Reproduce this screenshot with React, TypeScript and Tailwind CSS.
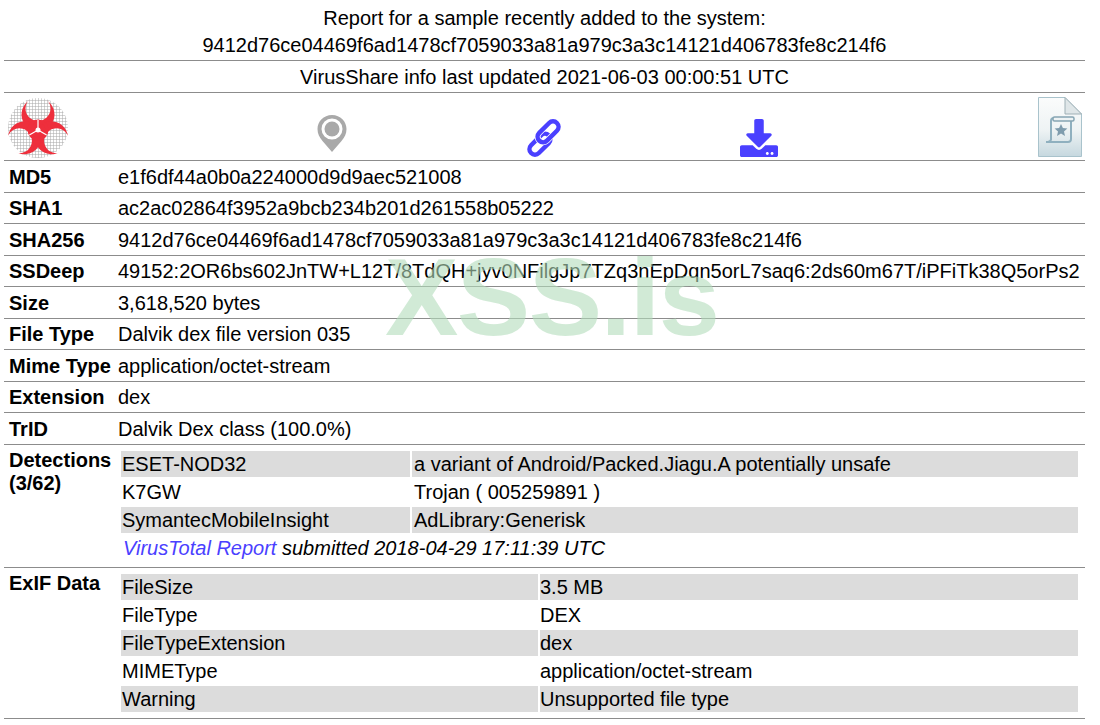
import { FaDownload } from 'react-icons/fa';

const fields = [
  ['MD5', 'e1f6df44a0b0a224000d9d9aec521008'],
  ['SHA1', 'ac2ac02864f3952a9bcb234b201d261558b05222'],
  ['SHA256', '9412d76ce04469f6ad1478cf7059033a81a979c3a3c14121d406783fe8c214f6'],
  ['SSDeep', '49152:2OR6bs602JnTW+L12T/8TdQH+jyv0NFilgJp7TZq3nEpDqn5orL7saq6:2ds60m67T/iPFiTk38Q5orPs2'],
  ['Size', '3,618,520 bytes'],
  ['File Type', 'Dalvik dex file version 035'],
  ['Mime Type', 'application/octet-stream'],
  ['Extension', 'dex'],
  ['TrID', 'Dalvik Dex class (100.0%)'],
];

const detections = [
  ['ESET-NOD32', 'a variant of Android/Packed.Jiagu.A potentially unsafe'],
  ['K7GW', 'Trojan ( 005259891 )'],
  ['SymantecMobileInsight', 'AdLibrary:Generisk'],
];

const exif = [
  ['FileSize', '3.5 MB'],
  ['FileType', 'DEX'],
  ['FileTypeExtension', 'dex'],
  ['MIMEType', 'application/octet-stream'],
  ['Warning', 'Unsupported file type'],
];

function Hazard() {
  const red = '#ee2f3c';
  return (
    <svg viewBox="0 0 60 62" className="w-[60px] h-[62px]">
      <defs>
        <pattern id="mesh" width="3" height="3" patternUnits="userSpaceOnUse">
          <rect width="3" height="3" fill="#fff" />
          <path d="M0 0H3M0 0V3" stroke="#a8a8a8" strokeWidth="1" />
        </pattern>
        <mask id="lobe" maskUnits="userSpaceOnUse" x="-20" y="-20" width="100" height="100">
          <rect x="-20" y="-20" width="100" height="100" fill="#fff" />
          <circle cx="30" cy="11.500" r="12.500" fill="#000" />
        </mask>
      </defs>
      <circle cx="30" cy="31" r="30" fill="url(#mesh)" />
      {[0, 120, 240].map((deg) => (
        <g key={deg} transform={`rotate(${deg} 30 33)`}>
          <circle cx="30" cy="17.500" r="16.500" fill={red} mask="url(#lobe)" />
        </g>
      ))}
      <circle cx="30" cy="33" r="9" fill="none" stroke={red} strokeWidth="3" />
      {[60, 180, 300].map((deg) => (
        <path key={deg} d="M30 33V43" stroke="#fff" strokeWidth="1.200" transform={`rotate(${deg} 30 33)`} />
      ))}
      <circle cx="30" cy="33" r="2.500" fill="#fff" />
    </svg>
  );
}

function Pin() {
  return (
    <svg viewBox="0 0 30 38" className="w-[30px] h-[38px]">
      <path fillRule="evenodd" fill="#a9a9a9" d="M15 0C6.5 0 .5 6.5.5 14c0 5 2 8 5 12l9.500 11 9.500-11c3-4 5-7 5-12C29.500 6.500 23.500 0 15 0zm0 3.500a10.500 10.500 0 1 1 0 21 10.500 10.500 0 0 1 0-21z" />
      <circle cx="15" cy="14" r="7.500" fill="#a9a9a9" />
    </svg>
  );
}

function ChainLink() {
  return (
    <svg viewBox="0 0 36 36" className="w-[36px] h-[36px] overflow-visible" fill="none" strokeWidth="4.500">
      <g transform="translate(18 18) rotate(-45)">
        <rect x="-19.750" y="-4" width="25" height="11" rx="5.500" stroke="#4a40ff" />
        <rect x="-5.250" y="-7" width="25" height="11" rx="5.500" stroke="#fff" strokeWidth="6" />
        <rect x="-5.250" y="-7" width="25" height="11" rx="5.500" stroke="#4a40ff" />
      </g>
    </svg>
  );
}

function FileIcon() {
  return (
    <svg viewBox="0 0 44 60" className="w-[44px] h-[60px]">
      <defs>
        <linearGradient id="paper" x1="0" y1="0" x2="0" y2="1">
          <stop offset="0" stopColor="#fbfcfc" />
          <stop offset="0.55" stopColor="#eef3f4" />
          <stop offset="1" stopColor="#c6d8df" />
        </linearGradient>
      </defs>
      <path d="M.5.500H27L43.500 17V59.500H.5z" fill="url(#paper)" stroke="#a9c3cc" />
      <path d="M27 .5V17H43.500z" fill="#dfe6e8" stroke="#9fb0b6" />
      <path d="M13 43V24c0-2 1-3 3-3h20M33 24v18c0 2-1 3-3 3H8c3 0 5-1 5-3" fill="none" stroke="#8fb0bf" strokeWidth="2" />
      <rect x="15" y="20" width="21" height="4" rx="1.500" fill="#eef3f4" stroke="#86a5b3" strokeWidth="1.500" />
      <path d="M23 27l1.900 4.100 4.500.4-3.400 3 1 4.400-4-2.300-4 2.300 1-4.400-3.400-3 4.500-.4z" fill="#7f9cad" />
    </svg>
  );
}

function Row({ label, children, className }: { label: React.ReactNode; children: React.ReactNode; className: string }) {
  return (
    <div className={`flex border-b border-[#8c8c8c] ${className}`}>
      <div className="w-[114px] pl-[5px] font-bold shrink-0">{label}</div>
      <div className="flex-1 min-w-0">{children}</div>
    </div>
  );
}

export default function App() {
  return (
    <div className="relative w-[1081px] ml-[4px] text-[20px] leading-[27px] text-black bg-white font-['Liberation_Sans',Arial,sans-serif]">
      <div className="pt-[5px] h-[61px] text-center border-b border-[#8c8c8c]">
        <div>Report for a sample recently added to the system:</div>
        <div>9412d76ce04469f6ad1478cf7059033a81a979c3a3c14121d406783fe8c214f6</div>
      </div>
      <div className="h-[32px] pt-[3px] text-center border-b border-[#8c8c8c]">
        VirusShare info last updated 2021-06-03 00:00:51 UTC
      </div>
      <div className="h-[68px] flex items-end border-b border-[#8c8c8c]">
        <div className="w-[114px] pb-[1px] pl-[4px]"><Hazard /></div>
        <div className="flex-1 flex items-end pb-[2px]">
          <div className="ml-[199px] mb-[5px]"><Pin /></div>
          <div className="ml-[179px] mb-[2px]"><ChainLink /></div>
          <div className="ml-[178px] mb-[1px]"><FaDownload className="w-[38px] h-[38px] text-[#4a40ff]" /></div>
          <div className="ml-auto mr-[3px] mb-[1px]"><FileIcon /></div>
        </div>
      </div>

      {fields.map(([label, value]) => (
        <Row key={label} label={label} className="h-[31.5px] pt-[2.7px]">
          <span className="whitespace-nowrap">{value}</span>
        </Row>
      ))}

      <Row label={<div className="pt-[4px] leading-[23px]">Detections<br />(3/62)</div>} className="h-[123.5px]">
        <div className="pt-[6px] pr-[7px] pl-[3px]">
          {detections.map(([name, result], i) => (
            <div key={name} className="grid grid-cols-[289px_1fr] gap-x-[2px] mb-[2px] h-[26px] leading-[26px]">
              <div className={`pl-[1px] ${i % 2 === 0 ? 'bg-[#dcdcdc]' : ''}`}>{name}</div>
              <div className={`pl-[2px] ${i % 2 === 0 ? 'bg-[#dcdcdc]' : ''}`}>{result}</div>
            </div>
          ))}
          <div className="pl-[2px] italic">
            <span className="text-[#4a40ff]">VirusTotal Report</span> submitted 2018-04-29 17:11:39 UTC
          </div>
        </div>
      </Row>

      <Row label={<div className="pt-[1.5px]">ExIF Data</div>} className="h-[151px]">
        <div className="pt-[6px] pr-[7px] pl-[3px]">
          {exif.map(([name, value], i) => (
            <div key={name} className="grid grid-cols-[417px_1fr] gap-x-[2px] h-[26px] mb-[2px] leading-[26px]">
              <div className={`pl-[1px] ${i % 2 === 0 ? 'bg-[#dcdcdc]' : ''}`}>{name}</div>
              <div className={i % 2 === 0 ? 'bg-[#dcdcdc]' : ''}>{value}</div>
            </div>
          ))}
        </div>
      </Row>

      {/* site watermark on top of the table */}
      <div className="absolute left-[381px] top-[237px] text-[110px] leading-[120px] tracking-[-1.5px] font-bold text-[#b2dcbb]/60 pointer-events-none">
        XSS.is
      </div>
    </div>
  );
}
